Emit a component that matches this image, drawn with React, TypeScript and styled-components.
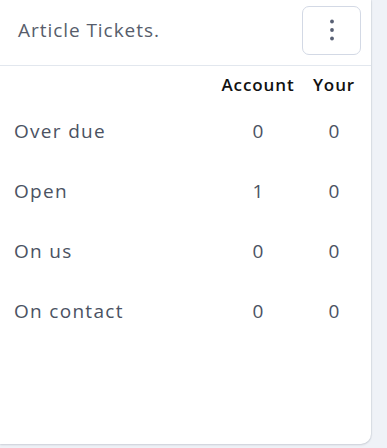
import React from "react";
import styled, { createGlobalStyle } from "styled-components";

const Global = createGlobalStyle`
  html, body { margin: 0; padding: 0; background: #eff2f7; }
  body { font-family: "Open Sans", "Liberation Sans", sans-serif; }
`;

const Page = styled.div`
  width: 387px;
  height: 448px;
  overflow: hidden;
`;

const Card = styled.section`
  width: 371px;
  height: 444px;
  background: #ffffff;
  border-radius: 0 0 10px 0;
  box-shadow: 0 1px 2px rgba(40, 50, 70, 0.18), 1px 0 1px rgba(40, 50, 70, 0.06);
  display: flex;
  flex-direction: column;
`;

const Header = styled.header`
  display: flex;
  align-items: center;
  justify-content: space-between;
  height: 66px;
  box-sizing: border-box;
  padding: 6px 10px 11px 18px;
  border-bottom: 1px solid #e2e7ee;
`;

const Title = styled.h2`
  margin: 0;
  font-size: 19px;
  font-weight: 400;
  color: #575d6b;
  letter-spacing: 0.95px;
`;

const MenuButton = styled.button`
  width: 59px;
  height: 49px;
  border: 1px solid #d3d9e5;
  border-radius: 7px;
  background: #fff;
  display: flex;
  align-items: center;
  justify-content: center;
  padding: 0;
`;

const Table = styled.div`
  display: grid;
  grid-template-columns: 1fr 80px 40px;
  column-gap: 16px;
  padding: 0 17px 0 14px;
`;

const HeadCell = styled.div`
  height: 34px;
  display: flex;
  align-items: center;
  justify-content: center;
  font-size: 17px;
  font-weight: 600;
  color: #111;
  padding-top: 1px;
  letter-spacing: 0.9px;
  white-space: nowrap;
`;

const Label = styled.div`
  height: 60px;
  display: flex;
  align-items: center;
  font-size: 19px;
  color: #4b5262;
  letter-spacing: 1.3px;
`;

const Value = styled(Label)`
  justify-content: center;
  letter-spacing: 0;
`;

const rows = [
  { label: "Over due", account: 0, your: 0 },
  { label: "Open", account: 1, your: 0 },
  { label: "On us", account: 0, your: 0 },
  { label: "On contact", account: 0, your: 0 },
];

const Dots = () => (
  <svg width="8" height="24" viewBox="0 0 8 24" aria-hidden="true">
    <circle cx="4" cy="3.5" r="1.9" fill="#586074" />
    <circle cx="4" cy="12" r="1.9" fill="#586074" />
    <circle cx="4" cy="20.5" r="1.9" fill="#586074" />
  </svg>
);

export default function App() {
  return (
    <Page>
      <Global />
      <Card>
        <Header>
          <Title>Article Tickets.</Title>
          <MenuButton aria-label="More">
            <Dots />
          </MenuButton>
        </Header>
        <Table>
          <div />
          <HeadCell>Account</HeadCell>
          <HeadCell>Your</HeadCell>
          {rows.map((r) => (
            <React.Fragment key={r.label}>
              <Label>{r.label}</Label>
              <Value>{r.account}</Value>
              <Value>{r.your}</Value>
            </React.Fragment>
          ))}
        </Table>
      </Card>
    </Page>
  );
}
